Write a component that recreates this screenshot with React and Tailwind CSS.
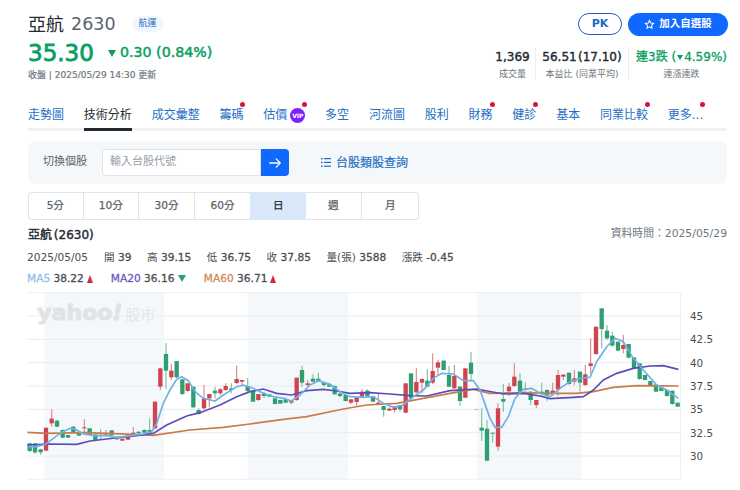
import React from "react";

const FONT = { fontFamily: '"DejaVu Sans","Noto Sans CJK TC",sans-serif' };

const A = [
[29,458,460,483,485,"g"],[45,458,460,487,492,"g"],[62,476,478,487,494,"g"],[78,413,413,482,482,"r"],[95,358,386,400,410,"r"],[111,390,392,410,412,"g"],[128,418,420,443,445,"g"],[144,435,435,443,443,"g"],[160,408,410,427,428,"g"],[177,427,427,437,437,"g"],[193,388,412,415,428,"r"],[209,415,415,435,437,"g"],[226,433,433,452,454,"g"],[242,418,430,432,450,"g"],[258,420,430,434,440,"r"],[275,420,421,436,438,"g"],[291,440,440,448,449,"g"],[307,446,446,452,452,"r"],[324,441,441,449,449,"r"],[340,412,428,437,440,"r"],[356,425,425,430,430,"g"],[373,418,420,428,430,"g"],[389,385,420,430,432,"g"],[405,335,335,415,417,"r"],[421,235,235,290,300,"r"],[438,160,192,242,298,"g"],[454,222,242,262,270,"r"],[470,213,213,262,264,"g"],[487,268,268,312,315,"g"],[503,280,280,303,305,"r"],[520,290,290,352,354,"g"],[536,355,360,372,374,"g"],[552,285,325,355,358,"r"],[568,312,312,325,352,"r"],[585,290,302,310,325,"g"],[601,293,298,310,315,"r"],[617,280,288,300,302,"r"],[634,280,295,300,310,"g"],[650,227,267,279,282,"r"],[666,270,270,275,290,"r"],[683,265,288,303,305,"g"],[699,303,303,335,335,"g"],[715,312,312,330,332,"r"],
];
const B = [
[42,306,310,318,324,"g"],[58,313,313,320,320,"g"],[75,325,325,342,343,"g"],[91,330,330,341,342,"g"],[107,322,327,338,339,"g"],[124,330,332,338,343,"r"],[140,263,263,330,332,"r"],[156,227,240,278,290,"g"],[173,270,280,285,290,"r"],[189,253,266,275,276,"g"],[205,248,266,275,276,"g"],[222,276,278,285,290,"g"],[238,278,282,290,290,"g"],[254,286,288,313,314,"g"],[270,308,311,318,322,"g"],[287,315,315,333,334,"g"],[303,328,328,338,343,"r"],[320,323,323,336,348,"r"],[336,298,305,320,322,"r"],[352,298,302,318,320,"g"],[369,318,320,335,337,"g"],[385,312,338,342,343,"r"],[401,348,348,360,380,"g"],[418,352,356,362,362,"r"],[434,348,348,360,368,"r"],[450,345,345,358,365,"g"],[467,280,280,368,370,"r"],[483,250,250,325,327,"g"],[499,235,276,307,310,"r"],[516,265,267,278,310,"r"],[532,237,272,290,292,"g"],[548,190,243,278,282,"r"],[564,210,217,233,255,"r"],[581,210,212,240,240,"g"],[597,228,255,290,292,"g"],[613,225,258,295,297,"r"],[630,288,290,333,347,"g"],[646,235,235,323,325,"r"],[663,185,218,252,270,"g"],[679,357,357,358,358,"g"],[695,355,413,422,453,"g"],[711,390,416,512,514,"g"],
];
const C = [
[8,428,428,431,458,"g"],[24,340,355,470,482,"r"],[40,282,327,335,365,"g"],[57,278,290,304,318,"r"],[73,220,260,288,290,"r"],[90,250,272,305,308,"g"],[106,277,296,300,305,"g"],[122,305,305,330,345,"g"],[139,330,330,345,355,"r"],[155,278,305,310,318,"g"],[171,298,300,315,332,"g"],[188,278,302,310,318,"r"],[204,240,255,298,318,"r"],[220,252,254,260,270,"r"],[237,248,248,282,284,"g"],[253,240,265,275,285,"r"],[270,245,245,278,305,"g"],[286,225,253,285,288,"r"],[302,145,220,228,250,"r"],[318,110,110,192,194,"r"],[335,55,55,117,175,"g"],[351,105,122,145,150,"g"],[367,125,137,167,170,"g"],[384,155,155,182,184,"g"],[400,135,165,177,190,"r"],[416,162,162,203,205,"g"],[432,202,202,234,236,"g"],[449,220,220,267,269,"g"],[465,255,255,270,271,"g"],[481,273,273,285,286,"g"],[498,283,283,305,306,"g"],[514,293,293,303,304,"g"],[531,300,300,318,320,"g"],[547,302,302,342,344,"g"],[563,338,338,350,351,"g"],
];
const candles = [
  ...A,
  ...B.map(([x, ...r]) => [x + 690, ...r]),
  ...C.map(([x, ...r]) => [x + 1410, ...r]),
];
const off = (arr, d) => arr.map(([x, y]) => `${x + d},${y}`).join(" ");
const ma5 = [
  off([[22,470],[50,470],[78,462],[100,445],[128,425],[150,415],[165,417],[190,432],[225,437],[260,436],[290,443],[330,437],[370,432],[395,425],[410,400],[430,340],[450,300],[470,268],[485,260],[505,272],[525,305],[550,325],[585,333],[610,315],[650,290],[670,285],[700,295]],0),
  off([[30,305],[60,318],[100,325],[125,333],[150,315],[180,285],[205,272],[240,283],[270,305],[300,320],[340,322],[370,320],[400,340],[430,352],[460,345],[490,320],[520,300],[550,265],[575,250],[610,252],[640,272],[670,272],[690,300]],690),
  off([[0,385],[15,412],[35,412],[55,380],[75,325],[100,298],[125,295],[150,310],[180,320],[210,295],[240,275],[270,265],[300,262],[320,215],[350,170],[375,145],[400,155],[430,205],[460,240],[500,285],[530,300],[565,325]],1410),
].join(" ");
const ma20 = [
  off([[22,465],[80,462],[170,463],[210,453],[260,447],[300,442],[350,437],[400,430],[440,405],[500,378],[540,368],[600,345],[650,320],[690,305]],0),
  off([[40,297],[80,310],[125,315],[170,302],[220,298],[260,303],[300,310],[360,308],[420,312],[480,317],[530,318],[600,302],[680,297]],690),
  off([[40,312],[100,310],[150,318],[180,326],[250,322],[280,320],[310,300],[340,270],[380,250],[430,235],[480,228],[520,227],[565,238]],1410),
].join(" ");
const ma60 = [
  off([[22,427],[80,430],[200,428],[340,433],[400,436],[510,420],[610,412]],0),
  off([[0,402],[100,388],[170,380],[280,357],[350,345],[440,340],[520,325],[600,310],[670,298]],690),
  off([[0,310],[100,308],[180,310],[260,310],[310,305],[370,292],[440,287],[565,288]],1410),
].join(" ");

const grid = [78, 148, 218, 288, 358, 428, 498];
const labels = ["45", "42.5", "40", "37.5", "35", "32.5", "30"];
const bands = [[73, 360], [683, 302], [1370, 315]];

function Chart() {
  return (
    <svg viewBox="0 0 2160 585" width="720" height="195" className="block">
      {bands.map(([x, w]) => (
        <rect key={x} x={x} y="8" width={w} height="560" fill="#f5f8fb" />
      ))}
      {grid.map((y) => (
        <line key={y} x1="22" x2="1982" y1={y} y2={y} stroke="#e9ecef" strokeWidth="3" />
      ))}
      <path d="M22 8H1982V568H22" fill="none" stroke="#edf0f2" strokeWidth="3" />
      <text x="52" y="90" fontSize="66" fontWeight="700" fill="#e0e3e6" stroke="#e0e3e6" strokeWidth="3" fontFamily="DejaVu Sans, sans-serif">yahoo<tspan fontStyle="italic">!</tspan></text>
      <text x="315" y="90" fontSize="46" fill="#e3e6e9" fontFamily="Noto Sans CJK TC, sans-serif">股市</text>
      {candles.map(([x, hi, top, bot, lo, c]) => {
        const col = c === "r" ? "#cf4450" : "#2f9e73";
        return (
          <g key={x}>
            <line x1={x} x2={x} y1={hi} y2={lo} stroke={c === "r" ? "#d98a90" : "#7fbfa4"} strokeWidth="3.5" />
            <rect x={x - 6.5} y={top} width="13" height={bot - top} fill={col} />
          </g>
        );
      })}
      <polyline points={ma60} fill="none" stroke="#c97c48" strokeWidth="5" />
      <polyline points={ma20} fill="none" stroke="#5a4fb8" strokeWidth="5" />
      <polyline points={ma5} fill="none" stroke="#6fb1e2" strokeWidth="5" />
      {grid.map((y, i) => (
        <text key={y} x="2010" y={y + 12} fontSize="31" fill="#464e56" fontFamily="DejaVu Sans, sans-serif">{labels[i]}</text>
      ))}
    </svg>
  );
}

const tabs = [
  ["走勢圖", 0], ["技術分析", 0, 1], ["成交彙整", 0], ["籌碼", 1], ["估價", 1, 0, 1], ["多空", 0], ["河流圖", 0],
  ["股利", 0], ["財務", 1], ["健診", 1], ["基本", 0], ["同業比較", 1], ["更多...", 1],
];

function Tab({ t }) {
  const [label, dot, active, vip] = t;
  return (
    <div className={`relative flex items-center h-[31px] pt-[2px] border-b-[3px] whitespace-nowrap ${active ? "border-[#232a31] text-[#232a31]" : "border-transparent text-[#1d6fc4]"}`}>
      <span>{label}</span>
      {vip ? (
        <span className="ml-[3px] w-[15px] h-[15px] rounded-full bg-[#7e1fff] text-white text-[6px] font-bold flex items-center justify-center">VIP</span>
      ) : null}
      {dot ? <span className="absolute right-[-2px] top-[2px] w-[5px] h-[5px] rounded-full bg-[#d3163f]" /> : null}
    </div>
  );
}

function Stat({ value, label, w }) {
  return (
    <div className={`flex flex-col items-center h-[32px] border-r border-[#eceef0] ${w}`}>
      <div className="text-[12px] [-webkit-text-stroke:0.4px] [word-spacing:-2.5px] text-[#232a31] leading-[18px] whitespace-nowrap">{value}</div>
      <div className="text-[9px] text-[#6e7780] leading-[16px] whitespace-nowrap">{label}</div>
    </div>
  );
}

const TriUp = () => <span className="inline-block ml-[3px] w-0 h-0 border-x-[3.5px] border-x-transparent border-b-[8px] border-b-[#d3293f]" />;
const TriDown = ({ c = "#2f9e73", s = 4, h = 7 }) => (
  <span className="inline-block w-0 h-0 border-x-transparent" style={{ borderLeftWidth: s, borderRightWidth: s, borderTopWidth: h, borderTopColor: c, borderTopStyle: "solid", borderLeftStyle: "solid", borderRightStyle: "solid" }} />
);

const Num = ({ children }) => <b className="font-normal [-webkit-text-stroke:0.3px]">{children}</b>;

export default function App() {
  return (
    <div style={FONT} className="w-[740px] h-[490px] overflow-hidden bg-white text-[#232a31]">
      <div className="pl-[28px] pr-[12px]">
        <div className="flex justify-between h-[97px] pt-[11px]">
          <div>
            <div className="flex items-center h-[26px]">
              <span className="text-[18px] text-[#232a31]">亞航</span>
              <span className="ml-[7px] text-[17.5px] text-[#5b636a]">2630</span>
              <span className="ml-[17px] w-[30px] h-[16px] rounded-full bg-[#eff6fc] text-[#1d6fc4] text-[9px] flex items-center justify-center">航運</span>
            </div>
            <div className="flex items-center h-[30px] mt-[1px] text-[#0a9f62]">
              <span className="text-[23px] w-[80px] [-webkit-text-stroke:0.8px]">35.30</span>
              <TriDown c="#0a9f62" s={4.5} h={7} />
              <span className="ml-[4px] text-[14.2px] [-webkit-text-stroke:0.5px]">0.30 (0.84%)</span>
            </div>
            <div className="text-[9px] [-webkit-text-stroke:0.2px] text-[#6e7780] leading-[14px] whitespace-nowrap">收盤 | 2025/05/29 14:30 更新</div>
          </div>
          <div className="flex flex-col items-end">
            <div className="flex gap-[6px] h-[24px] items-center mt-[1px]">
              <div className="w-[44px] h-[22px] rounded-full border-[1.5px] border-[#1d5fb3] text-[#1a66c9] text-[11px] font-bold flex items-center justify-center">PK</div>
              <div className="w-[100px] h-[23px] rounded-full bg-[#0f69ff] text-white text-[10.5px] font-bold flex items-center justify-center gap-[4px]">
                <svg width="11" height="11" viewBox="0 0 24 24" fill="none" stroke="white" strokeWidth="2.2"><path d="M12 3l2.7 5.9 6.3.7-4.7 4.3 1.3 6.3L12 17l-5.6 3.2 1.3-6.3L3 9.6l6.3-.7z" /></svg>
                加入自選股
              </div>
            </div>
            <div className="flex mt-[12px]">
              <Stat value="1,369" label="成交量" w="w-[48px] pl-[8px] pr-[6px]" />
              <Stat value="56.51 (17.10)" label="本益比 (同業平均)" w="w-[93px]" />
              <div className="flex flex-col items-center w-[99px] pl-[6px] h-[32px]">
                <div className="text-[12px] text-[#0a9f62] [-webkit-text-stroke:0.3px] leading-[18px] whitespace-nowrap flex items-center gap-[1px]">連3跌 (<TriDown c="#0a9f62" s={3.5} h={5} /> 4.59%)</div>
                <div className="text-[9px] text-[#6e7780] leading-[16px]">連漲連跌</div>
              </div>
            </div>
          </div>
        </div>

        <div className="flex gap-[19.8px] text-[12px] border-b-[3px] border-[#f0f3f5] h-[31px] items-start w-[699px] mt-[3px]">
          {tabs.map((t) => <div key={t[0]}><Tab t={t} /></div>)}
        </div>

        <div className="mt-[10px] w-[699px] h-[43px] rounded-lg bg-[#f5f8fb] flex items-center pl-[15px]">
          <span className="text-[11px] text-[#5b636a] w-[59px]">切換個股</span>
          <div className="w-[159px] h-[27px] bg-white border border-[#e0e4e9] rounded-l flex items-center pl-[7px] text-[11px] text-[#979ea8]">輸入台股代號</div>
          <div className="w-[28px] h-[27px] bg-[#0f69ff] rounded-r flex items-center justify-center">
            <svg width="14" height="14" viewBox="0 0 24 24" fill="none" stroke="white" strokeWidth="2.2" strokeLinecap="round" strokeLinejoin="round"><path d="M3 12h18M14 5l7 7-7 7" /></svg>
          </div>
          <div className="ml-[32px] flex items-center gap-[5px] text-[12px] [-webkit-text-stroke:0.2px] text-[#1d6fc4]">
            <svg width="10" height="9" viewBox="0 0 10 9" fill="#1d6fc4"><rect y="0" width="1.6" height="1.4" /><rect x="3" y="0" width="7" height="1.2" /><rect y="3.8" width="1.6" height="1.4" /><rect x="3" y="3.8" width="7" height="1.2" /><rect y="7.6" width="1.6" height="1.4" /><rect x="3" y="7.6" width="7" height="1.2" /></svg>
            台股類股查詢
          </div>
        </div>

        <div className="mt-[8px] w-[391px] h-[28px] rounded overflow-hidden shadow-[inset_0_0_0_1px_#e0e4e9] grid grid-cols-[repeat(6,55.6px)_1fr] text-[10.6px] [-webkit-text-stroke:0.25px] text-[#5b636a]">
          {["5分", "10分", "30分", "60分", "日", "週", "月"].map((l, i) => (
            <div key={l} className={`flex items-center justify-center ${i === 4 ? "bg-[#d8e8f8] text-[#232a31]" : ""} ${i < 6 && i !== 4 && i !== 3 ? "border-r border-[#e0e4e9]" : ""}`}>{l}</div>
          ))}
        </div>

        <div className="flex justify-between items-center mt-[5px] h-[20px]">
          <span className="text-[12px] [-webkit-text-stroke:0.4px] [word-spacing:-2px] text-[#232a31]">亞航 (2630)</span>
          <span className="text-[10.8px] text-[#6e7780] -mt-[2px] mr-[1px]">資料時間：2025/05/29</span>
        </div>

        <div className="flex mt-[2px] h-[22px] items-center text-[10.6px] text-[#464e56] gap-[15.5px] -ml-[1px]">
          <span>2025/05/05</span>
          <span className="ml-[0.5px]">開 <Num>39</Num></span>
          <span>高 <Num>39.15</Num></span>
          <span>低 <Num>36.75</Num></span>
          <span>收 <Num>37.85</Num></span>
          <span>量(張) <Num>3588</Num></span>
          <span>漲跌 <Num>-0.45</Num></span>
        </div>

        <div className="flex h-[20px] items-center text-[10.6px] [-webkit-text-stroke:0.3px] text-[#464e56] -ml-[1px] gap-[18px]">
          <span className="flex items-center whitespace-nowrap"><span className="text-[#8fc1ee]">MA5</span>&nbsp;38.22<TriUp /></span>
          <span className="flex items-center whitespace-nowrap"><span className="text-[#6a5bc0]">MA20</span>&nbsp;36.16&nbsp;<TriDown s={4} h={7} /></span>
          <span className="flex items-center whitespace-nowrap"><span className="text-[#d28a56]">MA60</span>&nbsp;36.71<TriUp /></span>
        </div>
      </div>

      <div className="pl-[20px] mt-[1px]">
        <Chart />
      </div>
    </div>
  );
}
